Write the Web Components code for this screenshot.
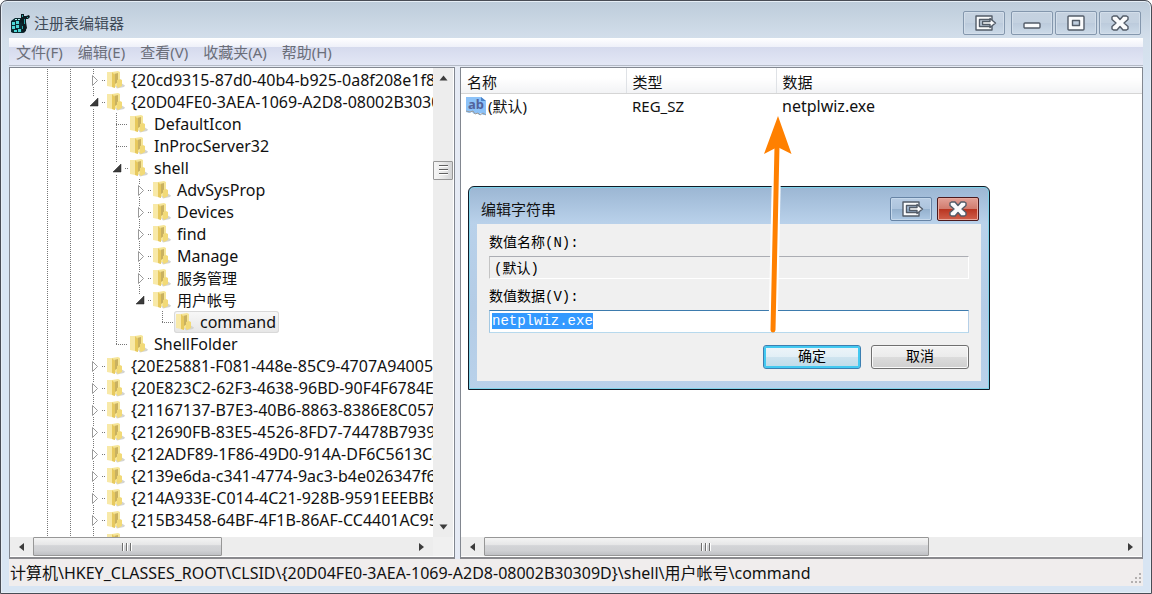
<!DOCTYPE html>
<html lang="zh-CN">
<head>
<meta charset="utf-8">
<title>注册表编辑器</title>
<style>
  html, body {
    margin: 0;
    height: 100%;
  }
  body {
    background: #fff;
    font: 15px/22px "Noto Sans", "Noto Sans CJK SC", sans-serif;
    color: #111;
    overflow: hidden;
  }
</style>
</head>
<body>
<reg-editor></reg-editor>

<script>
(function () {
  // ---- Helpers ----
  function define(name, html, setup) {
    const template = document.createElement("template");
    template.innerHTML = html;
    customElements.define(name, class extends HTMLElement {
      constructor() {
        super();
        this.attachShadow({ mode: "open" });
        this.shadowRoot.appendChild(template.content.cloneNode(true));
      }
      connectedCallback() {
        if (setup) setup(this, this.shadowRoot);
      }
    });
  }

  // ---- Caption buttons ----
  const GLYPHS = {
    redirect: `<path d="M20 2H4v14h16v-3.500H7.500v-7H20z"/><path d="M10.500 7.500H18V4.500L23.500 9 18 13.500v-3h-7.500z"/>`,
    minimize: `<rect x="4" y="9" width="16" height="5" rx="1"/>`,
    maximize: `<path fill-rule="evenodd" d="M5 2h14q1 0 1 1v12q0 1-1 1H5q-1 0-1-1V3q0-1 1-1zM8.500 6.500v5h7v-5z"/>`,
    close: `<path d="M4 3 5.500 2H9l3 3.500L15 2h3.500L20 3v2.500L16 9l4 3.500V15l-1.500 1H15l-3-3.500L9 16H5.500L4 15v-2.500L8 9 4 5.500z"/>`
  };

  define("caption-button", `
    <style>
      :host { display: block; }
      button {
        display: flex;
        align-items: center;
        justify-content: center;
        box-sizing: border-box;
        width: 42px;
        height: 24px;
        padding: 0;
        border: 1px solid #8497ad;
        border-radius: 2px;
        background: linear-gradient(#c6d2e0, #c3d1e0 50%, #bccbdc 51%, #ccdae8);
        box-shadow: inset 0 0 0 1px #d3deea;
      }
      svg { width: 26px; height: 18px; }
      svg * { fill: #fbfcfd; stroke: #535c68; stroke-width: 1.4; stroke-linejoin: round; }
      :host([tone="dialog"]) button {
        border-color: #6784a5;
        background: linear-gradient(#b9cde4, #adc4dd 49%, #94b0cd 50%, #adc8e3);
        box-shadow: inset 0 0 0 1px #c5d8eb;
      }
      :host([tone="danger"]) button {
        border-color: #4c1a1d;
        background: linear-gradient(#e3a197, #d17c6e 49%, #b83420 50%, #d0604b);
        box-shadow: inset 0 0 0 1px #e8a99d;
      }
    </style>
    <button type="button"></button>
  `, (host, root) => {
    const button = root.querySelector("button");
    button.setAttribute("aria-label", host.getAttribute("label"));
    button.innerHTML = `<svg viewBox="-1 0 26 18">${GLYPHS[host.getAttribute("kind")]}</svg>`;
  });

  // ---- Menu bar ----
  define("menu-bar", `
    <style>
      :host {
        display: block;
        background: linear-gradient(#fff, #eff1f9 32%, #d5daed 33%, #e3e7f5);
        border-bottom: 1px solid #b4bac6;
      }
      nav { display: flex; padding: 3px 7px 2px; gap: 15px; }
      button {
        padding: 0;
        border: 0;
        background: none;
        font: inherit;
        color: #6b6e79;
      }
    </style>
    <nav></nav>
  `, (host, root) => {
    const nav = root.querySelector("nav");
    host.getAttribute("items").split(" ").forEach((text) => {
      const button = document.createElement("button");
      button.type = "button";
      button.textContent = text;
      nav.appendChild(button);
    });
  });

  // ---- Scroll bar ----
  define("scroll-bar", `
    <style>
      :host {
        display: flex;
        align-items: stretch;
        background: #ededed;
        height: 19px;
        min-width: 0;
      }
      :host([vertical]) { flex-direction: column; width: 20px; height: auto; }
      button { padding: 0; border: 0; background: none; }
      .arrow {
        display: flex;
        align-items: center;
        justify-content: center;
        flex: 0 0 23px;
      }
      .arrow::before {
        content: "";
        border: 4px solid transparent;
        border-left: 5px solid #3c3c3c;
        border-right: 0;
      }
      .back::before { transform: rotate(180deg); }
      :host([vertical]) .arrow { flex-basis: 20px; }
      :host([vertical]) .back::before { transform: rotate(-90deg); }
      :host([vertical]) .next::before { transform: rotate(90deg); }
      .track { flex: 1; display: flex; min-width: 0; min-height: 0; }
      :host([vertical]) .track { flex-direction: column; }
      .before { flex: 0 0 var(--before, 0%); }
      .thumb {
        display: flex;
        align-items: center;
        justify-content: center;
        box-sizing: border-box;
        flex: 0 0 var(--size, 40%);
        border: 1px solid #979797;
        border-radius: 1px;
        background: linear-gradient(#f4f4f4, #e6e6e7 40%, #d3d4d7 45%, #cfd0d3 75%, #bfc0c4);
      }
      .grip {
        width: 11px;
        height: 8px;
        background: repeating-linear-gradient(90deg, #707070 0 1px, #fff 1px 2px, transparent 2px 4px);
      }
      :host([vertical]) .thumb {
        background: linear-gradient(90deg, #f6f6f6, #e8e8e8 50%, #d2d3d5);
      }
      :host([vertical]) .grip {
        height: 10px;
        width: 9px;
        background: repeating-linear-gradient(#606060 0 1px, #fff 1px 2px, transparent 2px 4px);
      }
    </style>
    <button type="button" class="arrow back" aria-label="后退"></button>
    <div class="track">
      <span class="before"></span>
      <button type="button" class="thumb" aria-label="滚动"><span class="grip"></span></button>
    </div>
    <button type="button" class="arrow next" aria-label="前进"></button>
  `);

  // ---- Tree ----
  // guides: one char per indent column ("|" line, "." blank)
  // node: + closed, - open, _ open and last, t leaf, l last leaf
  const NODES = [
    [".||", "+", "{20cd9315-87d0-40b4-b925-0a8f208e1f8"],
    [".||", "-", "{20D04FE0-3AEA-1069-A2D8-08002B3030"],
    [".|||", "t", "DefaultIcon"],
    [".|||", "t", "InProcServer32"],
    [".|||", "-", "shell"],
    [".||||", "+", "AdvSysProp"],
    [".||||", "+", "Devices"],
    [".||||", "+", "find"],
    [".||||", "+", "Manage"],
    [".||||", "+", "服务管理"],
    [".||||", "_", "用户帐号"],
    [".||||.", "l", "command", true],
    [".|||", "l", "ShellFolder"],
    [".||", "+", "{20E25881-F081-448e-85C9-4707A94005"],
    [".||", "+", "{20E823C2-62F3-4638-96BD-90F4F6784EE"],
    [".||", "+", "{21167137-B7E3-40B6-8863-8386E8C0571"],
    [".||", "+", "{212690FB-83E5-4526-8FD7-74478B7939C"],
    [".||", "+", "{212ADF89-1F86-49D0-914A-DF6C5613C8"],
    [".||", "+", "{2139e6da-c341-4774-9ac3-b4e026347f6"],
    [".||", "+", "{214A933E-C014-4C21-928B-9591EEEBB8"],
    [".||", "+", "{215B3458-64BF-4F1B-86AF-CC4401AC95"],
    [".||", "+", ""]
  ];

  const FOLDER = `
    <svg class="folder" viewBox="0 0 18 18" aria-hidden="true">
      <path d="M8 15l6-3 4 2.500-1 1.500-7 1.500z" fill="#d4d4d0"/>
      <path d="M5 1l6-1 2 1v13l-5 1.500z" fill="#f6e596"/>
      <path d="M7 3l4-1v9l-3 2z" fill="#c9b160"/>
      <path d="M0 1h5l3 3v13l-3-1-5-1z" fill="#f8e9a8"/>
      <path d="M5 1l3 3v13l-3-1z" fill="#e7c95e"/>
      <path d="M10 9l3-1 2 1v6l-4 2-1-1z" fill="#f2da78"/>
    </svg>`;

  const TWISTY = {
    "+": `<svg viewBox="0 0 23 22"><path d="M10.500 6.500v10l5-5z" fill="#fff" stroke="#999"/></svg>`,
    "-": `<svg viewBox="0 0 23 22"><path d="M16 7v8H8z" fill="#3b3b3b" stroke="#222" stroke-width=".5"/></svg>`
  };
  TWISTY._ = TWISTY["-"];

  define("tree-node", `
    <style>
      :host { display: flex; height: 22px; white-space: nowrap; }
      .col { flex: 0 0 23px; display: grid; }
      .col svg { grid-area: 1 / 1; width: 23px; height: 22px; }
      .line {
        grid-area: 1 / 1;
        justify-self: start;
        width: 1px;
        margin-left: 11px;
        background: repeating-linear-gradient(#777 0 1px, transparent 1px 2px);
      }
      .half { height: 12px; }
      .gap {
        background:
          repeating-linear-gradient(#777 0 1px, transparent 1px 2px) 0 0 / 1px 5px no-repeat,
          repeating-linear-gradient(#777 0 1px, transparent 1px 2px) 0 18px / 1px 4px no-repeat;
      }
      .gap.top { height: 5px; }
      .dash {
        grid-area: 1 / 1;
        align-self: start;
        justify-self: end;
        width: 12px;
        height: 1px;
        margin-top: 11px;
        background: repeating-linear-gradient(90deg, #777 0 1px, transparent 1px 2px);
      }
      .dash.short { width: 3px; }
      .item {
        display: flex;
        align-items: center;
        padding: 0 3px 0 2px;
        gap: 6px;
        border-radius: 3px;
      }
      .latin { font-size: 16px; }
      .folder { width: 18px; height: 18px; }
      :host([selected]) .item {
        background: linear-gradient(#f8f8f8, #e6e6e6);
        box-shadow: inset 0 0 0 1px #d9d9d9;
      }
    </style>
  `, (host, root) => {
    const [guides, node, label, selected] = host.data;
    let html = "";
    for (const g of guides) {
      html += `<span class="col">${g === "|" ? `<i class="line"></i>` : ""}</span>`;
    }
    const shape = { "+": "gap", "-": "gap", "_": "gap top", "t": "", "l": "half" }[node];
    const script = /^[\x20-\x7e]+$/.test(label) ? "latin" : "cjk";
    html += `<span class="col"><i class="line ${shape}"></i>` +
      `<i class="dash ${TWISTY[node] ? "short" : ""}"></i>${TWISTY[node] || ""}</span>` +
      `<span class="item">${FOLDER}<span class="${script}">${label}</span></span>`;
    root.innerHTML += html;
    host.setAttribute("role", "treeitem");
    if (selected) host.setAttribute("selected", "");
  });

  define("key-tree", `
    <style>
      :host {
        display: grid;
        grid-template: minmax(0, 1fr) auto / minmax(0, 1fr) auto;
        background: #fff;
        border: 1px solid #828790;
        border-bottom: 2px solid #8a8a8e;
        padding: 0 1px 1px 0;
        min-height: 0;
      }
      .view { overflow: hidden; padding: 1px 0 0 3px; }
      scroll-bar[vertical] { --before: 17%; --size: 19px; }
      .across { --before: 0%; --size: 50%; }
      .corner { background: #f0f0f0; }
    </style>
    <div class="view" role="tree"></div>
    <scroll-bar vertical></scroll-bar>
    <scroll-bar class="across"></scroll-bar>
    <div class="corner"></div>
  `, (host, root) => {
    const view = root.querySelector(".view");
    NODES.forEach((data) => {
      const node = document.createElement("tree-node");
      node.data = data;
      view.appendChild(node);
    });
  });

  // ---- Value list ----
  define("value-list", `
    <style>
      :host {
        display: flex;
        flex-direction: column;
        background: #fff;
        border: 1px solid #828790;
        border-bottom: 2px solid #8a8a8e;
        padding-bottom: 1px;
        min-height: 0;
      }
      .view { flex: 1; min-height: 0; overflow: hidden; }
      table { width: 100%; border-collapse: collapse; table-layout: fixed; }
      th, td { padding: 1px 6px; text-align: left; font-weight: normal; white-space: nowrap; }
      th {
        padding: 3px 6px 0;
        border-right: 1px solid #dfe2e6;
        border-bottom: 1px solid #d5d5d5;
        background: linear-gradient(#fff 40%, #f2f3f5);
      }
      th:last-child { border-right: 0; }
      col.name { width: 165px; }
      col.type { width: 150px; }
      .name-cell { display: flex; align-items: center; gap: 2px; }
      td:first-child { padding-left: 5px; }
      .latin { font-size: 16px; }
      svg { width: 20px; height: 20px; }
      scroll-bar { --before: 0%; --size: 70%; }
    </style>
    <div class="view">
      <table>
        <colgroup><col class="name"><col class="type"><col></colgroup>
        <thead><tr><th>名称</th><th>类型</th><th>数据</th></tr></thead>
        <tbody>
          <tr>
            <td>
              <span class="name-cell">
                <svg viewBox="0 0 20 20" aria-hidden="true">
                  <path d="M0 1h15l5 4v14h-3l-2-2-2 2-2-2-3 1-2-2-3 1-3-1z" fill="#8cc2f8"/>
                  <path d="M15 1l5 4h-5z" fill="#4a82c8"/>
                  <path d="M0 15l4 1 3-1 2 3 3-1 2 2 3-2 3 2" fill="none" stroke="#9a9a9a"/>
                  <text x="2" y="13" font-size="13" font-weight="bold" fill="#53629b">ab</text>
                </svg>
                <span>(默认)</span>
              </span>
            </td>
            <td>REG_SZ</td>
            <td class="latin">netplwiz.exe</td>
          </tr>
        </tbody>
      </table>
    </div>
    <scroll-bar></scroll-bar>
  `);

  // ---- Status bar ----
  define("status-bar", `
    <style>
      :host {
        display: flex;
        justify-content: space-between;
        align-items: flex-end;
        background: #f0eded;
        padding: 3px 1px 2px;
        white-space: nowrap;
        font-size: 16px;
      }
      svg { width: 11px; height: 11px; fill: #b3b0b0; }
    </style>
    <slot></slot>
    <svg viewBox="0 0 11 11" aria-hidden="true">
      <path d="M8 0h2v2H8zM8 4h2v2H8zM8 8h2v2H8zM4 4h2v2H4zM4 8h2v2H4zM0 8h2v2H0z"/>
    </svg>
  `);

  // ---- Edit dialog ----
  define("edit-dialog", `
    <style>
      :host {
        display: block;
        box-sizing: border-box;
        border: 1px solid #111a26;
        border-radius: 6px 6px 0 0;
        background: linear-gradient(#9bb6d3, #b9d1ea 36px, #b4cce6 60%, #b9d1ea);
        box-shadow: inset 0 0 0 1px #7fd3ea;
        padding: 0 8px 8px;
      }
      header { display: flex; align-items: center; height: 37px; padding: 0 2px 0 4px; gap: 5px; }
      h2 { flex: 1; margin: 7px 0 0; font: inherit; }
      caption-button { margin-top: 7px; }
      form {
        display: flex;
        flex-direction: column;
        background: #f0f0f0;
        padding: 9px 12px 12px;
        font: 14px/20px "Liberation Mono", "Noto Sans CJK SC", monospace;
        color: #000;
      }
      input {
        box-sizing: border-box;
        width: 100%;
        height: 23px;
        margin: 3px 0 8px;
        padding: 0 2px 2px;
        border: 1px solid;
        border-color: #3d7bad #b5cfe7 #b7d9ed #a4c9e3;
        outline: 0;
        font: inherit;
        color: #000;
        background: #fff;
      }
      input[readonly] { background: #f0f0f0; border-color: #abadb3 #fff #fff #c4c4c4; padding-left: 4px; }
      input::selection { background: #3399ff; color: #fff; }
      .value { margin-bottom: 12px; }
      .actions { display: flex; justify-content: flex-end; gap: 10px; }
      .actions button {
        width: 98px;
        height: 24px;
        padding: 0;
        border: 1px solid #707070;
        border-radius: 3px;
        font: inherit;
        color: #000;
        background: linear-gradient(#f3f3f3, #ebebeb 49%, #dcdcdc 50%, #cfcfcf);
        box-shadow: inset 0 0 0 1px #fafafa;
      }
      .actions .primary {
        border-color: #3c7fb1;
        background: linear-gradient(#eef5f9, #e2eff6 49%, #cfe4ef 50%, #bedbe9);
        box-shadow: inset 0 0 0 2px #43c9f1;
      }
    </style>
    <header>
      <h2>编辑字符串</h2>
      <caption-button kind="redirect" tone="dialog" label="移动窗口"></caption-button>
      <caption-button kind="close" tone="danger" label="关闭"></caption-button>
    </header>
    <form>
      <label for="name">数值名称(N):</label>
      <input id="name" type="text" value="(默认)" readonly>
      <label for="value">数值数据(V):</label>
      <input id="value" class="value" type="text" value="netplwiz.exe" spellcheck="false">
      <div class="actions">
        <button type="submit" class="primary">确定</button>
        <button type="button">取消</button>
      </div>
    </form>
  `, (host, root) => {
    const value = root.getElementById("value");
    value.focus();
    value.select();
    root.querySelector("form").addEventListener("submit", (e) => e.preventDefault());
  });

  // ---- Annotation arrow ----
  define("pointer-arrow", `
    <style>
      :host { display: block; pointer-events: none; }
      svg { display: block; width: 32px; height: 222px; }
    </style>
    <svg viewBox="0 0 32 222" aria-hidden="true">
      <path d="M17 32L13 216" stroke="#fff" stroke-width="9"/>
      <path d="M17 32L13 216" stroke="#ff8000" stroke-width="5" stroke-linecap="round"/>
      <path d="M18 2L31.500 40 17.500 33 4 40z" fill="#ff8000"/>
    </svg>
  `);

  // ---- Main window ----
  define("reg-editor", `
    <style>
      :host {
        position: relative;
        display: flex;
        flex-direction: column;
        box-sizing: border-box;
        height: 100vh;
        padding: 0 8px 7px;
        border: 1px solid #484c55;
        border-radius: 7px 7px 0 0;
        background: linear-gradient(#bdccda, #d3dfeb 38px, #d8e5f3 80px);
        box-shadow: inset 0 0 0 1px #e6eef6;
      }
      header {
        display: flex;
        align-items: center;
        height: 37px;
        padding: 6px 2px 0 1px;
        box-sizing: border-box;
        gap: 2px;
      }
      header .logo { width: 20px; height: 20px; }
      h1 { flex: 1; margin: 0 0 0 2px; font: inherit; color: #3f4b58; }
      .first { margin-right: 4px; }
      main {
        flex: 1;
        display: grid;
        grid-template-columns: 446fr 5px 683fr;
        min-height: 0;
        padding-top: 1px;
        background: #e6ebf5;
      }
      value-list { grid-column: 3; }
      edit-dialog { position: absolute; left: 467px; top: 185px; width: 522px; }
      pointer-arrow { position: absolute; left: 759px; top: 113px; }
    </style>
    <header>
      <svg class="logo" viewBox="0 0 20 20" aria-hidden="true">
        <path d="M1 8l4-3h7v4h4v9l-3 2H3l-2-1z" fill="#0b2a30"/>
        <path d="M2 9h3v3H2zM6 8h3v3H6zM2 13h3v3H2zM6 12h3v3H6zM4 17h3v2H4zM8 16h3v3H8z" fill="#4fd6d6"/>
        <path d="M5 6h2v1H5zM8 6h2v1H8z" fill="#b8f2f0"/>
        <path d="M11 1h3v2h2l3-1 1 2-2 2h-2v3l1 6-3 5-2-2 1-5-1-4-2 1-1-2 2-3z" fill="#0d1b20"/>
        <path d="M12 2h1v2h-1zM14 6h1v5h-1zM17 4h1v1h-1zM12 13h1v3h-1z" fill="#2aa6a8"/>
      </svg>
      <h1>注册表编辑器</h1>
      <caption-button class="first" kind="redirect" label="移动窗口"></caption-button>
      <caption-button kind="minimize" label="最小化"></caption-button>
      <caption-button kind="maximize" label="最大化"></caption-button>
      <caption-button kind="close" label="关闭"></caption-button>
    </header>
    <menu-bar items="文件(F) 编辑(E) 查看(V) 收藏夹(A) 帮助(H)"></menu-bar>
    <main>
      <key-tree></key-tree>
      <value-list></value-list>
    </main>
    <status-bar>计算机\\HKEY_CLASSES_ROOT\\CLSID\\{20D04FE0-3AEA-1069-A2D8-08002B30309D}\\shell\\用户帐号\\command</status-bar>
    <edit-dialog></edit-dialog>
    <pointer-arrow></pointer-arrow>
  `);
})();
</script>
</body>
</html>
